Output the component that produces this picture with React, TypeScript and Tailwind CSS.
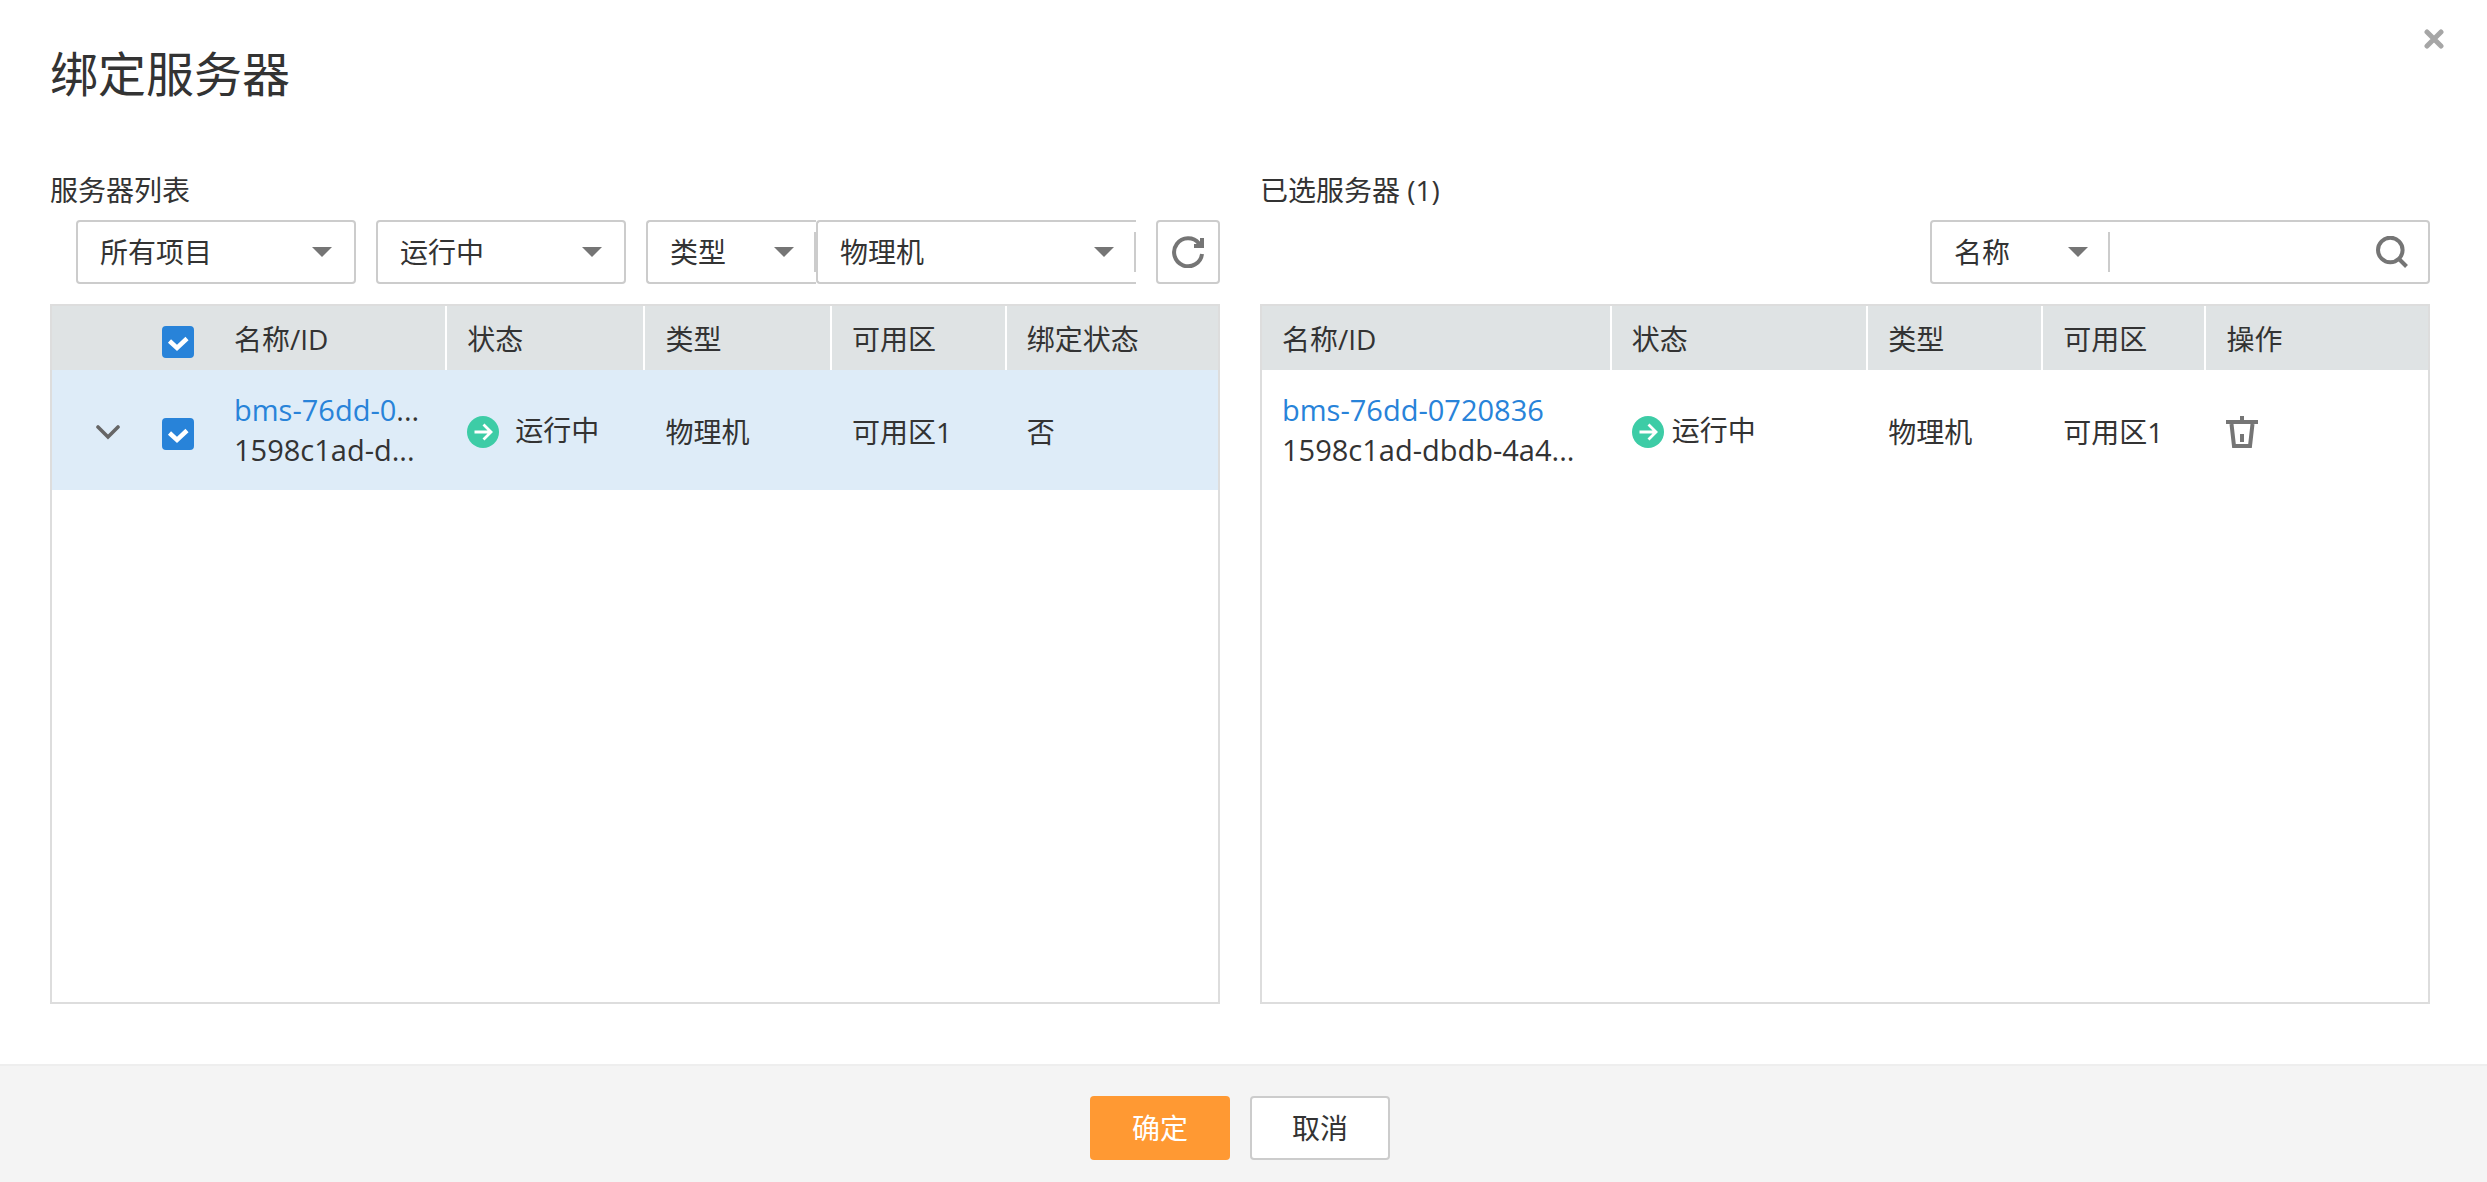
import type { ReactNode, SVGProps } from 'react';
import clsx from 'clsx';

interface Server {
  name: string;
  id: string;
  status: string;
  type: string;
  zone: string;
  bound: string;
}

const servers: Server[] = [
  {
    name: 'bms-76dd-0720836',
    id: '1598c1ad-dbdb-4a4',
    status: '运行中',
    type: '物理机',
    zone: '可用区1',
    bound: '否',
  },
];

function shorten(text: string, max: number) {
  return text.length > max ? text.slice(0, max) : text;
}

function Caret({ className }: { className?: string }) {
  return (
    <svg viewBox="0 0 20 10" className={clsx('h-2.5 w-5 fill-[#757575]', className)} aria-hidden="true">
      <path d="M0 0h20L10 10z" />
    </svg>
  );
}

function RefreshIcon(props: SVGProps<SVGSVGElement>) {
  return (
    <svg viewBox="0 0 32 32" fill="none" aria-hidden="true" {...props}>
      <path d="M30 18A14 14 0 1 1 27 7.500" stroke="#757575" strokeWidth="4" />
      <path d="M32 2v10H22V8h3.500L28 5.500V2z" fill="#757575" />
    </svg>
  );
}

function SearchIcon(props: SVGProps<SVGSVGElement>) {
  return (
    <svg viewBox="0 0 32 32" fill="none" stroke="#757575" strokeWidth="4" aria-hidden="true" {...props}>
      <circle cx="14.300" cy="14" r="12.300" />
      <path d="M23 23l7.500 7.500" />
    </svg>
  );
}

function TrashIcon(props: SVGProps<SVGSVGElement>) {
  return (
    <svg viewBox="0 0 32 32" fill="none" stroke="#757575" strokeWidth="4" aria-hidden="true" {...props}>
      <path d="M0 6h32M16 0v6M5.500 8L8 30h16l2.500-22M16 18v8" />
    </svg>
  );
}

function RunningIcon() {
  return (
    <svg viewBox="0 0 32 32" className="size-8 shrink-0" fill="none" aria-hidden="true">
      <circle cx="16" cy="16" r="16" fill="#3dcca6" />
      <path d="M7.500 16h16M16.500 8.500l7.500 7.500-7.500 7.500" stroke="#fff" strokeWidth="2.800" />
    </svg>
  );
}

interface SelectProps {
  label: string;
  value: string;
  divider?: boolean;
  className?: string;
}

function Select({ label, value, divider, className }: SelectProps) {
  return (
    <div className={clsx('relative border-[#cccccc] bg-white', className)}>
      <select aria-label={label} className="h-full w-full appearance-none bg-transparent pl-[22px] pr-12 outline-none">
        <option>{value}</option>
      </select>
      <Caret className="pointer-events-none absolute right-[22px] top-1/2 -translate-y-1/2" />
      {divider && <span className="absolute right-0 top-1/2 h-10 w-0.5 -translate-y-1/2 bg-[#cccccc]" />}
    </div>
  );
}

function Checkbox({ label }: { label: string }) {
  return (
    <span className="relative mt-2 block size-8">
      <input
        type="checkbox"
        defaultChecked
        aria-label={label}
        className="peer block size-8 appearance-none rounded border-2 border-[#cccccc] bg-white checked:border-[#2883d9] checked:bg-[#2883d9]"
      />
      <svg
        viewBox="0 0 32 32"
        className="pointer-events-none absolute inset-0 hidden peer-checked:block"
        fill="none"
        stroke="#fff"
        strokeWidth="4.500"
        aria-hidden="true"
      >
        <path d="M7.500 15l7.500 7L25 12.500" />
      </svg>
    </span>
  );
}

function Th({ children }: { children?: ReactNode }) {
  return <th className="h-16 border-white px-5 pt-0.5 text-left font-normal not-last:border-r-2">{children}</th>;
}

function Td({ children }: { children?: ReactNode }) {
  return <td className="h-[120px] px-5 pt-1">{children}</td>;
}

interface NameCellProps {
  server: Server;
  nameLength: number;
  idLength: number;
}

function NameCell({ server, nameLength, idLength }: NameCellProps) {
  return (
    <td className="h-[120px] whitespace-nowrap pl-5 text-[29px] leading-10">
      <div>
        <a href="#server" className="text-[#2883d9]">
          {shorten(server.name, nameLength)}
        </a>
        {server.name.length > nameLength && '...'}
      </div>
      <div>{shorten(server.id, idLength)}...</div>
    </td>
  );
}

function ServerList() {
  return (
    <table className="w-full table-fixed border-separate border-spacing-0">
      <colgroup>
        <col className="w-[90px]" />
        <col className="w-[72px]" />
        <col className="w-[20%]" />
        <col className="w-[17%]" />
        <col className="w-[16%]" />
        <col className="w-[15%]" />
        <col />
      </colgroup>
      <thead className="bg-[#dfe3e4]">
        <tr>
          <td />
          <td className="pl-5">
            <Checkbox label="全选" />
          </td>
          <Th>名称/ID</Th>
          <Th>状态</Th>
          <Th>类型</Th>
          <Th>可用区</Th>
          <Th>绑定状态</Th>
        </tr>
      </thead>
      <tbody>
        {servers.map((server) => (
          <tr key={server.id} className="bg-[#deecf8]">
            <td className="pl-11 pt-1">
              <button type="button" aria-label="展开" className="block">
                <svg
                  viewBox="0 0 24 24"
                  className="size-6"
                  fill="none"
                  stroke="#666"
                  strokeWidth="3.600"
                  strokeLinecap="round"
                  aria-hidden="true"
                >
                  <path d="M2 7l10 10L22 7" />
                </svg>
              </button>
            </td>
            <td className="pl-5">
              <Checkbox label={server.name} />
            </td>
            <NameCell server={server} nameLength={10} idLength={10} />
            <Td>
              <span className="flex items-center gap-4">
                <RunningIcon />
                <span className="pb-1">{server.status}</span>
              </span>
            </Td>
            <Td>{server.type}</Td>
            <Td>{server.zone}</Td>
            <Td>{server.bound}</Td>
          </tr>
        ))}
      </tbody>
    </table>
  );
}

function SelectedList() {
  return (
    <table className="w-full table-fixed border-separate border-spacing-0">
      <colgroup>
        <col className="w-[30%]" />
        <col className="w-[22%]" />
        <col className="w-[15%]" />
        <col className="w-[14%]" />
        <col />
      </colgroup>
      <thead className="bg-[#dfe3e4]">
        <tr>
          <Th>名称/ID</Th>
          <Th>状态</Th>
          <Th>类型</Th>
          <Th>可用区</Th>
          <Th>操作</Th>
        </tr>
      </thead>
      <tbody>
        {servers.map((server) => (
          <tr key={server.id}>
            <NameCell server={server} nameLength={16} idLength={17} />
            <Td>
              <span className="flex items-center gap-2">
                <RunningIcon />
                <span className="pb-1">{server.status}</span>
              </span>
            </Td>
            <Td>{server.type}</Td>
            <Td>{server.zone}</Td>
            <Td>
              <button type="button" aria-label="移除" className="block">
                <TrashIcon className="size-8" />
              </button>
            </Td>
          </tr>
        ))}
      </tbody>
    </table>
  );
}

export default function App() {
  return (
    <div className="flex min-h-screen flex-col bg-white font-['Open_Sans','Noto_Sans_CJK_SC',sans-serif] text-[28px] leading-10 text-[#333333]">
      <header className="flex items-start justify-between pl-[50px] pr-[43px]">
        <h1 className="pt-10 text-[48px] leading-[68px]">绑定服务器</h1>
        <button type="button" aria-label="关闭" className="mt-[29px] block">
          <svg
            viewBox="0 0 20 20"
            className="size-5"
            fill="none"
            stroke="#a6a6a6"
            strokeWidth="5"
            strokeLinecap="round"
            aria-hidden="true"
          >
            <path d="M3 3l14 14M17 3L3 17" />
          </svg>
        </button>
      </header>

      <main className="grid flex-1 grid-cols-2 gap-10 pb-[60px] pl-[50px] pr-[57px] pt-[62px]">
        <section className="flex min-w-0 flex-col">
          <h2>服务器列表</h2>
          <div className="mb-5 mt-2.5 flex h-16 gap-5 pl-[26px]">
            <Select label="项目" value="所有项目" className="w-[280px] rounded border-2" />
            <Select label="状态" value="运行中" className="w-[250px] rounded border-2" />
            <div className="flex min-w-0 flex-1">
              <Select label="筛选" value="类型" divider className="w-[170px] rounded-l border-2 border-r-0" />
              <Select label="类型" value="物理机" divider className="min-w-0 flex-1 rounded-l border-2 border-r-0" />
            </div>
            <button
              type="button"
              aria-label="刷新"
              className="flex w-16 items-center justify-center rounded border-2 border-[#cccccc]"
            >
              <RefreshIcon className="size-8" />
            </button>
          </div>
          <div className="flex-1 border-2 border-[#dddddd]">
            <ServerList />
          </div>
        </section>

        <section className="flex min-w-0 flex-col">
          <h2>已选服务器 (1)</h2>
          <div className="mb-5 mt-2.5 flex h-16 justify-end">
            <div className="flex w-[500px] items-center rounded border-2 border-[#cccccc] pr-5">
              <Select label="搜索条件" value="名称" divider className="h-full w-[178px] rounded" />
              <input type="text" aria-label="搜索" className="h-full min-w-0 flex-1 px-4 outline-none" />
              <button type="button" aria-label="查询">
                <SearchIcon className="size-8" />
              </button>
            </div>
          </div>
          <div className="flex-1 border-2 border-[#dddddd]">
            <SelectedList />
          </div>
        </section>
      </main>

      <footer className="flex justify-center gap-5 border-t-2 border-[#eeeeee] bg-[#f4f4f4] pb-[22px] pr-[7px] pt-[30px]">
        <button type="button" className="h-16 w-[140px] rounded bg-[#ff9933] text-white">
          确定
        </button>
        <button type="button" className="h-16 w-[140px] rounded border-2 border-[#cccccc] bg-white">
          取消
        </button>
      </footer>
    </div>
  );
}
